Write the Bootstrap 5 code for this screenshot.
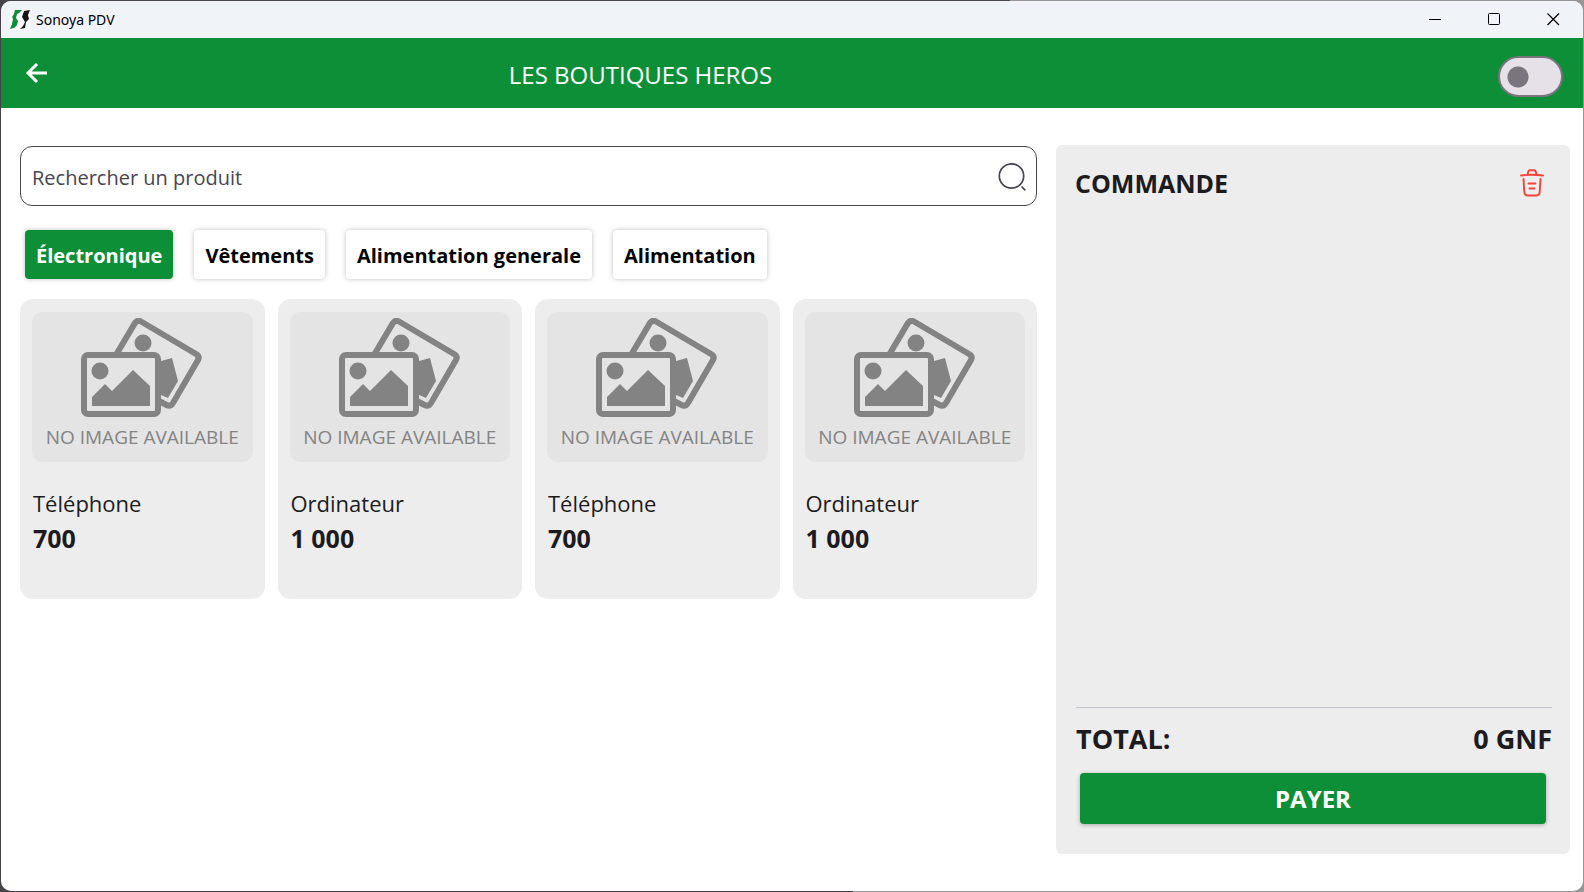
<!DOCTYPE html>
<html lang="fr">
<head>
<meta charset="utf-8">
<meta name="viewport" content="width=device-width, initial-scale=1">
<title>Sonoya PDV</title>
<link rel="stylesheet" href="https://cdn.jsdelivr.net/npm/bootstrap@5.3.0/dist/css/bootstrap.min.css">
<style>
  :root { --brand: #0d8f37; --panel: #ededed; --ink: #1c1b20; }
  body { font-family: "Open Sans", "Noto Sans", sans-serif; color: var(--ink);
    background: linear-gradient(100deg, #464448 0 58%, #969696 58%); }
  .app-window { margin: 1px; min-height: calc(100vh - 2px); border-radius: 10px; overflow: hidden; }
  .title-bar { height: 37px; background: #f0f3f7; padding: 0 23px 0 9px; color: #000; font: 14px/20px "Noto Sans", sans-serif; }
  .title-bar button, .app-bar button, .order button.bin { background: none; border: 0; padding: 0; line-height: 0; }
  .window-buttons { gap: 46px; }
  .app-bar { height: 70px; background: var(--brand); padding: 0 20px 0 24px; }
  .app-title { font-size: 24px; line-height: 34px; padding: 3px 0 0 5px; }
  .bar-end { flex: 0 0 336px; }
  .form-check-input.toggle { width: 65px; height: 41px; margin: 7px 0 0; border: 2px solid #7a747e; background-color: #e6e0e9; border-radius: 21px; box-shadow: none;
    background-image: radial-gradient(circle, #7a747e 10px, transparent 11px); background-size: 22px 22px; background-position: 7px center; background-repeat: no-repeat; }
  .form-check-input.toggle:checked { background-color: #bfe5ca; background-position: 32px center; }
  .workspace { display: grid; grid-template-columns: 1017fr 514fr; gap: 19px; padding: 37px 13px 37px 19px; }
  .search { height: 60px; margin-top: 1px; border: 1px solid #49454f; border-radius: 12px; padding: 2px 10px 0 11px; }
  .search input { border: 0; outline: 0; min-width: 0; font-size: 20px; line-height: 30px; color: #49454f; background: none; padding: 1px 0 0; }
  .search input::placeholder { color: #49454f; opacity: 1; }
  .chips { margin: 24px 5px 20px; gap: 21px; }
  .chips .btn { height: 49px; padding: 2px 11px 0; border: 0; border-radius: 4px; font-size: 20px; font-weight: 700; line-height: 28px; color: #000; background: #fff; box-shadow: 0 0 5px rgba(0,0,0,.25); }
  .chips .btn.active { background: var(--brand); color: #fff; }
  .products { display: grid; grid-template-columns: repeat(4, 1fr); gap: 13px; }
  .product { background: var(--panel); border-radius: 13px; padding: 13px 12px; min-height: 300px; }
  .thumb { height: 150px; border-radius: 10px; background: #e4e4e4; color: #838383; padding-top: 6px; }
  .thumb span { font-size: 19px; line-height: 24px; margin-top: 8px; white-space: nowrap; }
  .product-name, .product-price { padding-left: 1px; }
  .product-name { font-size: 22px; line-height: 34px; margin-top: 24px; }
  .product-price { font-size: 25px; line-height: 36px; font-weight: 700; }
  .order { background: var(--panel); border-radius: 6px; padding: 19px 18px 30px 19px; min-height: 709px; }
  .order h2 { font-size: 25px; line-height: 38px; font-weight: 700; }
  .total { border-top: 1px solid #c5c2cc; font-size: 27px; line-height: 38px; font-weight: 700; padding: 12px 0 15px; margin-left: 1px; }
  .btn.pay { height: 51px; margin: 0 6px 0 5px; border: 0; border-radius: 4px; background: var(--brand); color: #fff; font-size: 24px; line-height: 36px; font-weight: 700; box-shadow: 0 1px 4px rgba(0,0,0,.3); }
</style>
</head>
<body>
<svg class="d-none" xmlns="http://www.w3.org/2000/svg">
  <symbol id="photos" viewBox="0 0 122 99">
    <path d="M35 37L54 5Q56.500 1.500 60 3.500L115 36Q119 38.500 117 42L92 85Q89.500 89 85.500 87L78 83" fill="none" stroke="currentColor" stroke-width="6"/>
    <circle cx="62" cy="25" r="8.500" fill="currentColor"/>
    <path d="M80 43L91 40L97 63L87 80L80 77Z" fill="currentColor"/>
    <rect x="3" y="37" width="74" height="59" rx="4" fill="#e4e4e4" stroke="currentColor" stroke-width="6"/>
    <circle cx="19" cy="53" r="8.500" fill="currentColor"/>
    <path d="M11 88V79L24 66L31 73L52 52L69 68V88Z" fill="currentColor"/>
  </symbol>
</svg>

<div class="app-window bg-white">
  <div class="title-bar d-flex align-items-center justify-content-between">
    <div class="d-flex align-items-center gap-1">
      <svg width="22" height="20" viewBox="0 0 22 20" aria-hidden="true"><rect width="20" height="20" fill="#fff"/><path fill="#0d8f37" d="M5 0H12L9 3L7 4L6 8L8 11L7 15L4 18L0 19L2 14L3 9L2 7L4 4Z"/><path fill="#151515" d="M14 1L20 0L18 5L19 9L16 12L15 18L10 19L13 16L15 12L12 7L13 4Z"/></svg>
      <span>Sonoya PDV</span>
    </div>
    <div class="window-buttons d-flex align-items-center">
      <button type="button" aria-label="Réduire"><svg width="13" height="13"><path d="M0 6.500H12" stroke="#000"/></svg></button>
      <button type="button" aria-label="Agrandir"><svg width="13" height="13"><rect x=".5" y=".5" width="11" height="11" rx="1" fill="none" stroke="#000"/></svg></button>
      <button type="button" aria-label="Fermer"><svg width="13" height="13"><path d="M.5 .5L12 12M12 .5L.5 12" stroke="#000" stroke-width="1.200"/></svg></button>
    </div>
  </div>

  <header class="app-bar d-flex align-items-center text-white">
    <button type="button" class="text-white" aria-label="Retour"><svg width="24" height="22" viewBox="0 0 24 22"><path d="M12 2L3 11L12 20M3 11H22" fill="none" stroke="currentColor" stroke-width="3"/></svg></button>
    <div class="app-title flex-grow-1 text-center">LES BOUTIQUES HEROS</div>
    <div class="bar-end form-switch ps-0 d-flex justify-content-end">
      <input class="form-check-input toggle" type="checkbox" role="switch" aria-label="Mode">
    </div>
  </header>

  <main class="workspace">
    <section>
      <label class="search d-flex align-items-center">
        <input class="flex-grow-1" type="text" placeholder="Rechercher un produit" aria-label="Rechercher un produit">
        <svg width="28" height="28" viewBox="0 0 28 28" fill="none" stroke="#49454f" stroke-width="1.700"><circle cx="13.500" cy="13" r="12.200"/><path d="M23.500 23.500L27.300 27.300"/></svg>
      </label>
      <div class="chips d-flex flex-wrap">
        <button type="button" class="btn active">Électronique</button>
        <button type="button" class="btn">Vêtements</button>
        <button type="button" class="btn">Alimentation generale</button>
        <button type="button" class="btn">Alimentation</button>
      </div>
      <div class="products">
        <article class="product">
          <div class="thumb d-flex flex-column align-items-center"><svg width="122" height="99"><use href="#photos"/></svg><span>NO IMAGE AVAILABLE</span></div>
          <div class="product-name">Téléphone</div><div class="product-price">700</div>
        </article>
        <article class="product">
          <div class="thumb d-flex flex-column align-items-center"><svg width="122" height="99"><use href="#photos"/></svg><span>NO IMAGE AVAILABLE</span></div>
          <div class="product-name">Ordinateur</div><div class="product-price">1 000</div>
        </article>
        <article class="product">
          <div class="thumb d-flex flex-column align-items-center"><svg width="122" height="99"><use href="#photos"/></svg><span>NO IMAGE AVAILABLE</span></div>
          <div class="product-name">Téléphone</div><div class="product-price">700</div>
        </article>
        <article class="product">
          <div class="thumb d-flex flex-column align-items-center"><svg width="122" height="99"><use href="#photos"/></svg><span>NO IMAGE AVAILABLE</span></div>
          <div class="product-name">Ordinateur</div><div class="product-price">1 000</div>
        </article>
      </div>
    </section>

    <aside class="order d-flex flex-column">
      <div class="d-flex justify-content-between align-items-center">
        <h2 class="m-0">COMMANDE</h2>
        <button type="button" class="bin me-2" aria-label="Vider la commande"><svg width="24" height="28" viewBox="0 0 24 28" fill="none" stroke="#f44336" stroke-width="1.900" stroke-linecap="round"><path d="M1 6.500Q12 5 23 6.500M7.500 5.500L8.300 2.500Q8.600 1.300 10 1.300H14Q15.400 1.300 15.700 2.500L16.500 5.500M3.500 10L4.300 23Q4.600 26.500 7.500 26.500H16.500Q19.400 26.500 19.700 23L20.500 10M8.500 14.500H15.500M9.500 19.500H14.500"/></svg></button>
      </div>
      <div class="total d-flex justify-content-between mt-auto"><span>TOTAL:</span><span>0 GNF</span></div>
      <button type="button" class="btn pay">PAYER</button>
    </aside>
  </main>
</div>
<script src="https://cdn.jsdelivr.net/npm/bootstrap@5.3.0/dist/js/bootstrap.bundle.min.js"></script>
</body>
</html>
